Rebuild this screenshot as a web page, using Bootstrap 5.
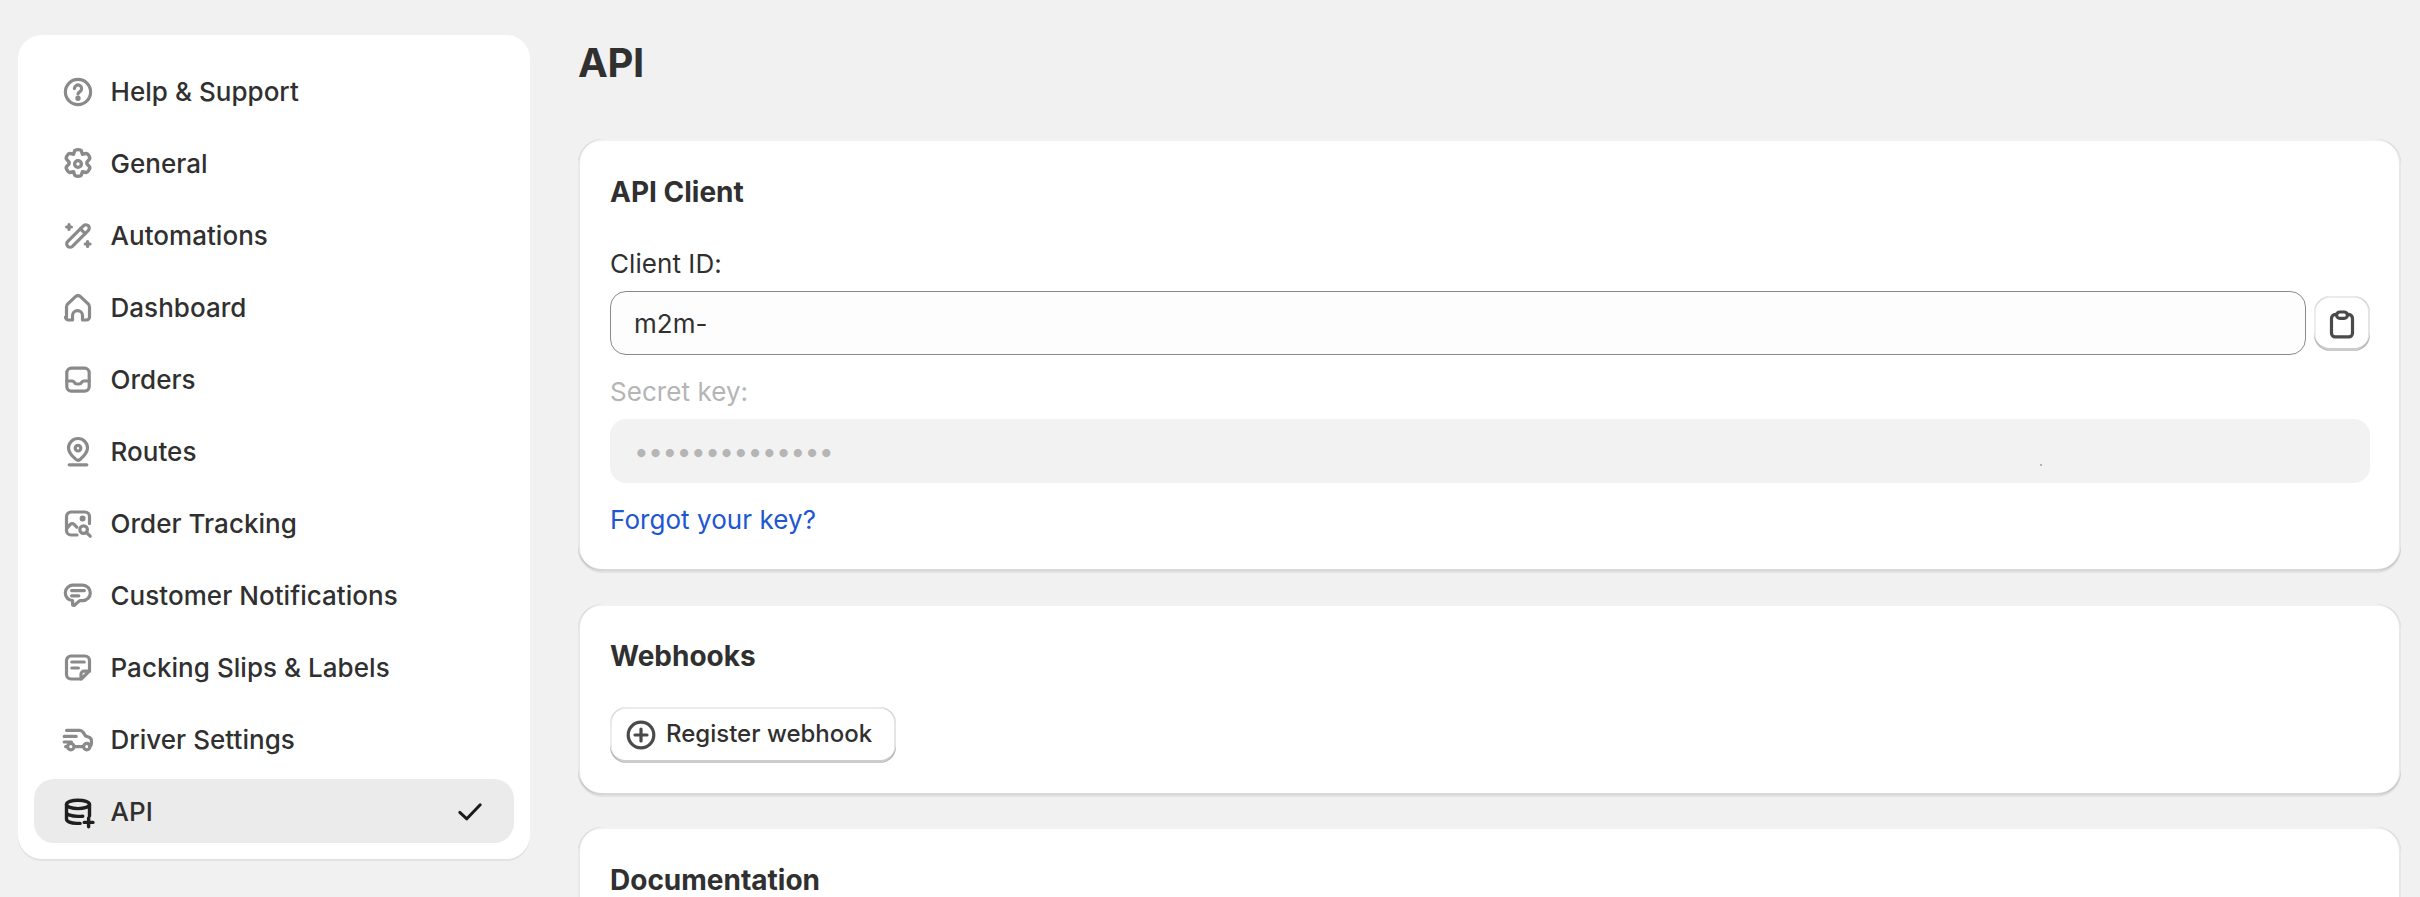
<!DOCTYPE html>
<html lang="en">
<head>
<meta charset="utf-8">
<title>API</title>
<link rel="stylesheet" href="https://cdn.jsdelivr.net/npm/bootstrap@5.3.0/dist/css/bootstrap.min.css">
<style>
html,body{height:100%;overflow:hidden}
body{background:#f1f1f1;color:#303030;font-family:Inter,"Noto Sans",sans-serif;font-size:26px;line-height:40px}
.shell{padding:35px 19px 0 18px;gap:48px}
.side-panel{width:512px;flex:none;height:824px;background:#fff;border-radius:24px;padding:24px 16px 16px;box-shadow:0 2px 0 rgba(26,26,26,.07)}
.side-nav{gap:8px}
.side-nav .nav-link{height:64px;padding:2px 24px 0;gap:12.5px;color:#303030;font-weight:500;font-size:26px;letter-spacing:.04px;border-radius:20px;display:flex;align-items:center}
.side-nav .nav-link.active{background:#ebebeb;color:#303030}
.side-ico{width:40px;height:40px;flex:none;fill:none;stroke:#8a8a8a;stroke-width:1.6;stroke-linecap:round;stroke-linejoin:round}
.active .side-ico{stroke:#1f1f1f;stroke-width:1.7}
.tick-ico{width:40px;height:40px;margin-left:auto;margin-right:0;fill:none;stroke:#1a1a1a;stroke-width:1.5;stroke-linecap:round;stroke-linejoin:round}
.main-col{min-width:0;flex:1;margin-top:-35px}
.page-title{font-size:40px;line-height:48px;font-weight:700;margin:39px 0 52px;letter-spacing:-.4px;color:#303030}
.pane{border:0;border-radius:24px;background:#fff;padding:31px 31px 31px 32px;margin-bottom:33px;box-shadow:0 2px 0 rgba(26,26,26,.07),inset 0 2px 0 rgba(26,26,26,.06),inset 2px 0 0 rgba(26,26,26,.1),inset -2px 0 0 rgba(26,26,26,.1),inset 0 -2px 0 rgba(26,26,26,.17)}
.top-pane{padding-top:32px}
.hook-pane{padding-bottom:32px;margin-bottom:32px}
.pane-title{font-size:28px;line-height:40px;font-weight:650;margin:0;color:#303030;padding-top:1px}
.field-label{display:block;margin:0 0 7px;font-size:26px;line-height:40px;color:#303030;letter-spacing:.06px}
.first-label{margin-top:32px}
.off-label{color:#b5b5b5;margin-top:17px}
.id-input.form-control{height:64px;border:1.5px solid #8a8a8a;border-radius:16px;background:#fdfdfd;font-size:26px;padding:0 23px;color:#303030;box-shadow:none}
.key-input.form-control{height:64px;border:0;border-radius:16px;background:#f2f2f2;font-size:26px;padding:0 24px;color:#b5b5b5;opacity:1;letter-spacing:-.4px}
.key-wrap{position:relative}
.key-speck{position:absolute;left:1430px;top:45px;width:2px;height:2px;background:#b5b5b5}
.copy-btn.btn{width:56px;height:55px;padding:0;flex:none;margin-left:8px;border:0;border-radius:16px;background:#fff;display:flex;align-items:center;justify-content:center;box-shadow:inset 0 2px 0 rgba(0,0,0,.08),inset 2px 0 0 rgba(0,0,0,.08),inset -2px 0 0 rgba(0,0,0,.1),inset 0 -3px 0 rgba(0,0,0,.2)}
.btn-ico{width:40px;height:40px;flex:none;fill:none;stroke:#4a4a4a;stroke-width:1.6;stroke-linecap:round;stroke-linejoin:round}
.forgot{display:block;margin-top:17px;color:#2056d2;text-decoration:none;font-size:26px;line-height:40px;letter-spacing:.06px}
.add-btn.btn{height:56px;width:fit-content;margin-top:31px;padding:0 24px 2px 11px;border:0;border-radius:16px;background:#fff;color:#303030;font-size:24px;font-weight:500;white-space:nowrap;display:flex;align-items:center;gap:5px;box-shadow:inset 0 2px 0 rgba(0,0,0,.08),inset 2px 0 0 rgba(0,0,0,.08),inset -2px 0 0 rgba(0,0,0,.1),inset 0 -3px 0 rgba(0,0,0,.2)}
.add-btn .btn-ico{margin-top:2px}
.doc-pane{height:300px;padding-top:32px}
</style>
</head>
<body>
<div class="shell d-flex">
  <aside class="side-panel">
    <nav class="nav side-nav flex-column">
      <a class="nav-link" href="#"><svg class="side-ico" viewBox="0 0 20 20"><circle cx="10" cy="10" r="6.3"/><path d="M8.200 8.300a1.800 1.800 0 1 1 2.800 1.500c-.6.4-1 .7-1 1.200"/><circle cx="10" cy="13.100" r=".55" fill="#8a8a8a"/></svg>Help &amp; Support</a>
      <a class="nav-link" href="#"><svg class="side-ico" viewBox="0 0 20 20"><g transform="translate(10 10) scale(1.06) translate(-10 -10)"><path d="M8.500 3.600c.3-.5 2.700-.5 3 0l.6 1.800 1.900-.4c.6-.1 1.900 2.100 1.500 2.600l-1.300 1.500 0 .8 1.300 1.500c.4.500-.9 2.700-1.500 2.600l-1.900-.4-.6 1.800c-.3.500-2.700.5-3 0l-.6-1.800-1.900.4c-.6.1-1.900-2.100-1.500-2.600l1.300-1.500 0-.8-1.300-1.500c-.4-.5.9-2.700 1.500-2.600l1.900.4Z"/><circle cx="10" cy="10" r="1.600"/></g></svg>General</a>
      <a class="nav-link" href="#"><svg class="side-ico" viewBox="0 0 20 20"><path d="M12.800 4.800a1.700 1.700 0 0 1 2.400 2.400L7.200 15.200a1.700 1.700 0 0 1-2.400-2.400Z"/><path d="M11.200 6.400l2.400 2.400M5.500 4.300v2.400M4.300 5.500h2.400M14.800 12.800v2.400M13.600 14h2.400"/></svg>Automations</a>
      <a class="nav-link" href="#"><svg class="side-ico" viewBox="0 0 20 20"><path d="M4.250 14.500V9.500c0-.7.3-1.300.8-1.700l3.700-3.500a1.900 1.900 0 0 1 2.500 0l3.700 3.500c.5.4.8 1 .8 1.700v5c0 .8-.7 1.500-1.500 1.500h-2v-2.200a2.500 2.500 0 0 0-5 0V16h-2c-.8 0-1.500-.7-1.500-1.500Z"/></svg>Dashboard</a>
      <a class="nav-link" href="#"><svg class="side-ico" viewBox="0 0 20 20"><rect x="4.400" y="4.100" width="11.200" height="11.500" rx="2.300"/><path d="M4.400 10.500h2.700c.5 0 .8.300 1 .6.300.5.800.9 1.400.9h1c.6 0 1.100-.4 1.400-.9.200-.3.500-.6 1-.6h2.700"/></svg>Orders</a>
      <a class="nav-link" href="#"><svg class="side-ico" viewBox="0 0 20 20"><path d="M10 3.250a4.750 4.750 0 0 0-4.750 4.750c0 2.300 2.300 4.500 3.700 5.700.6.500 1.500.5 2.100 0 1.400-1.200 3.700-3.400 3.700-5.700A4.750 4.750 0 0 0 10 3.250Z"/><circle cx="10" cy="8.100" r="1.400"/><path d="M5.600 16.400h8.800"/></svg>Routes</a>
      <a class="nav-link" href="#"><svg class="side-ico" viewBox="0 0 20 20"><path d="M9.500 15.500H6.500a2.250 2.250 0 0 1-2.250-2.250V6.250A2.250 2.250 0 0 1 6.500 4h7a2.250 2.250 0 0 1 2.250 2.250V9.800"/><circle cx="12.300" cy="7.200" r=".7" fill="#8a8a8a"/><path d="M4.400 12.200l1.700-2c.6-.6 1.400-.6 1.900 0l1.400 1.400"/><circle cx="12.800" cy="12.800" r="1.900"/><path d="M14.300 14.300l1.800 1.800"/></svg>Order Tracking</a>
      <a class="nav-link" href="#"><svg class="side-ico" viewBox="0 0 20 20"><path d="M7.700 4.600h4.600a3.850 3.850 0 0 1 0 7.700h-1.400l-2.700 2.300c-.4.300-.9 0-.9-.4v-1.900A3.850 3.850 0 0 1 7.700 4.600Z"/><path d="M6.800 7.300h6.400M6.800 9.900h3.600"/></svg>Customer Notifications</a>
      <a class="nav-link" href="#"><svg class="side-ico" viewBox="0 0 20 20"><path d="M6.500 4h7a2.250 2.250 0 0 1 2.250 2.250v5.200l-4.100 4.050H6.500a2.250 2.250 0 0 1-2.250-2.250V6.250A2.250 2.250 0 0 1 6.500 4Z"/><path d="M6.900 7h6.200M6.900 10h3.300M15.700 11.600h-2.700a1.500 1.500 0 0 0-1.500 1.500v2.300"/></svg>Packing Slips &amp; Labels</a>
      <a class="nav-link" href="#"><svg class="side-ico" viewBox="0 0 20 20"><path d="M4.300 5.200h6.500c.7 0 1.300.3 1.700.9l1.300 1.900 1.700.6c.7.3 1.200.9 1.200 1.700v1.500c0 .7-.4 1.200-1 1.400M3.100 8.200h6M3.100 11h3.600M8.300 13.300h4.300M4.700 13.300h-.9"/><circle cx="6.400" cy="13.300" r="1.600"/><circle cx="14.400" cy="13.300" r="1.600"/></svg>Driver Settings</a>
      <a class="nav-link active" href="#"><svg class="side-ico" viewBox="0 0 20 20"><ellipse cx="10" cy="6.200" rx="5.750" ry="2.100"/><path d="M4.250 6.200v7.300c0 1.300 2.200 2.200 5 2.200h1.800M15.750 6.200v5.800M4.250 10.100c0 1.200 2.500 2.100 5.750 2.100 1 0 1.500 0 2.400-.1M15.300 13v4.400M13.100 15.200h4.400"/></svg>API<svg class="tick-ico" viewBox="0 0 20 20"><path d="M4.900 10.200l3.500 3.200L15.100 6.400"/></svg></a>
    </nav>
  </aside>
  <main class="main-col">
    <h1 class="page-title">API</h1>
    <section class="card pane top-pane">
      <h2 class="pane-title">API Client</h2>
      <label class="field-label first-label" for="cid">Client ID:</label>
      <div class="d-flex align-items-center">
        <input id="cid" class="form-control id-input" type="text" value="m2m-" readonly>
        <button class="btn copy-btn" type="button" aria-label="Copy"><svg class="btn-ico" viewBox="0 0 20 20"><path d="M7.300 5.700H6.700a2 2 0 0 0-1.950 2v7.400c0 1 .8 1.800 1.800 1.800h6.900c1 0 1.800-.8 1.800-1.800V7.700a2 2 0 0 0-1.950-2h-.6"/><rect x="7.300" y="4.500" width="5.400" height="3.200" rx="1.600"/></svg></button>
      </div>
      <label class="field-label off-label" for="skey">Secret key:</label>
      <div class="key-wrap">
        <input id="skey" class="form-control key-input" type="password" value="abcdefghijklmn" disabled>
        <span class="key-speck"></span>
      </div>
      <a class="forgot" href="#">Forgot your key?</a>
    </section>
    <section class="card pane hook-pane">
      <h2 class="pane-title">Webhooks</h2>
      <button class="btn add-btn" type="button"><svg class="btn-ico" viewBox="0 0 20 20"><circle cx="10" cy="10" r="6.400"/><path d="M10 7v6M7 10h6"/></svg>Register webhook</button>
    </section>
    <section class="card pane doc-pane">
      <h2 class="pane-title">Documentation</h2>
    </section>
  </main>
</div>
<script src="https://cdn.jsdelivr.net/npm/bootstrap@5.3.0/dist/js/bootstrap.bundle.min.js"></script>
</body>
</html>
